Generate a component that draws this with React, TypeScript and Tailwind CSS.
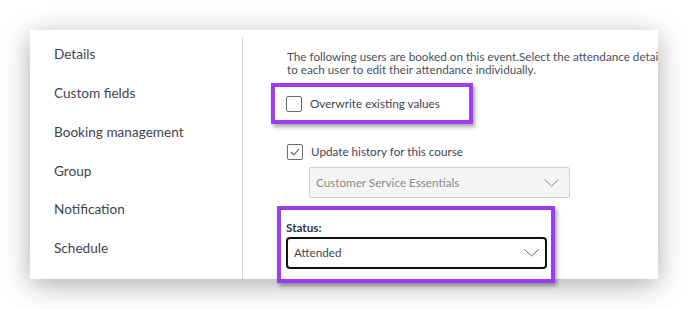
import React from 'react';

const navItems = ['Details', 'Custom fields', 'Booking management', 'Group', 'Notification', 'Schedule'];

function Chevron({ className }: { className?: string }) {
  return (
    <svg width="15" height="8" viewBox="0 0 15 8" fill="none" className={className}>
      <path d="M0.5 0.5l7 6.5 7-6.5" stroke="currentColor" strokeWidth="1" />
    </svg>
  );
}

function Checkbox({ checked }: { checked?: boolean }) {
  return (
    <span className="flex h-[16px] w-[16px] shrink-0 items-center justify-center rounded-[2px] border border-[#6b6b6b] bg-white">
      {checked && (
        <svg width="10" height="8" viewBox="0 0 10 8" fill="none">
          <path d="M1 4l2.8 2.8L9 1" stroke="#555" strokeWidth="1.1" />
        </svg>
      )}
    </span>
  );
}

export default function App() {
  return (
    <div className="h-[309px] w-[688px] bg-white pl-[30px] pt-[30px] font-['Lato','Liberation_Sans',sans-serif]">
      <div className="flex h-[249px] w-[628px] bg-white shadow-[0_6px_26px_rgba(0,0,0,0.32)]">
        <aside className="mt-[7px] w-[213px] shrink-0 border-r border-[#d9d9d9]">
          <ul className="-mt-[2px] pl-[24px] text-[13.6px] text-[#3f4352]">
            {navItems.map((item) => (
              <li key={item} className="flex h-[38.8px] items-center">
                {item}
              </li>
            ))}
          </ul>
        </aside>

        <section className="min-w-0 flex-1 pl-[44px] pt-[20px] text-[11.7px] text-[#3f4352]">
          <div className="overflow-hidden whitespace-nowrap leading-[13px] text-[#4b4f5c]">
            The following users are booked on this event.Select the attendance details and click Apply, or click next
            <br />
            to each user to edit their attendance individually.
          </div>

          <div className="-ml-[16px] mt-[7px] flex h-[41px] w-[202px] items-center gap-[8px] border-[4px] border-[#9d3cf2] bg-white pl-[11px] shadow-[2px_3px_4px_rgba(0,0,0,0.35)]">
            <Checkbox />
            <span>Overwrite existing values</span>
          </div>

          <label className="mt-[20px] flex h-[16px] items-center gap-[8px]">
            <Checkbox checked />
            <span>Update history for this course</span>
          </label>

          <div className="ml-[22px] mt-[7px] flex h-[31px] w-[261px] items-center justify-between rounded-[2px] border border-[#cfcfcf] bg-[#f5f5f5] pl-[6px] pr-[10px] text-[#8a8a8a]">
            <span>Customer Service Essentials</span>
            <Chevron className="text-[#8a8a8a]" />
          </div>

          <div className="relative -ml-[10px] mt-[8px] w-[278px] border-[4px] border-[#9d3cf2] bg-white pb-[10px] pl-[5px] pr-[4px] pt-[10px] shadow-[2px_3px_4px_rgba(0,0,0,0.35)]">
            <div className="font-bold leading-[14px] text-[#2f3340]">Status:</div>
            <div className="mt-[3px] flex h-[32px] w-[261px] items-center justify-between rounded-[4px] border-2 border-[#111] bg-white pl-[6px] pr-[6px] text-[#3f4352]">
              <span>Attended</span>
              <Chevron className="text-[#666]" />
            </div>
          </div>
        </section>
      </div>
    </div>
  );
}
